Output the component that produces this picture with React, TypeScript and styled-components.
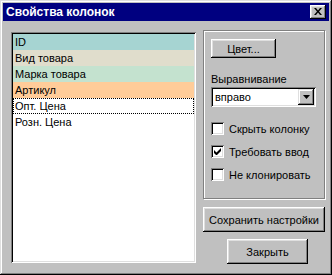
import React, { useState } from 'react';
import styled, { createGlobalStyle } from 'styled-components';

const GlobalStyle = createGlobalStyle`
  html, body {
    margin: 0;
    padding: 0;
    background: #c0c0c0;
  }
  * {
    box-sizing: border-box;
  }
`;

const columns = [
  { name: 'ID', color: '#a6d4d2' },
  { name: 'Вид товара', color: '#e0ddcc' },
  { name: 'Марка товара', color: '#c4e2cf' },
  { name: 'Артикул', color: '#ffcc99' },
  { name: 'Опт. Цена', color: '#ffffff' },
  { name: 'Розн. Цена', color: '#ffffff' },
];

const App: React.FC = () => {
  const [selected, setSelected] = useState(4);
  const [hide, setHide] = useState(false);
  const [required, setRequired] = useState(true);
  const [noClone, setNoClone] = useState(false);

  return (
    <>
      <GlobalStyle />
      <Window>
        <TitleBar>
          <Title>Свойства колонок</Title>
          <CloseButton>
            <svg width="8" height="7" viewBox="0 0 8 7">
              <path d="M0 0h2l2 2.5L6 0h2L5 3.5 8 7H6L4 4.5 2 7H0l3-3.5z" fill="#000" />
            </svg>
          </CloseButton>
        </TitleBar>

        <Content>
          <ListBox>
            {columns.map((c, i) => (
              <ListRow
                key={c.name}
                $bg={c.color}
                $focused={i === selected}
                onClick={() => setSelected(i)}
              >
                {c.name}
              </ListRow>
            ))}
          </ListBox>

          <Side>
            <GroupBox>
              <Button $w={65} $h={19}>Цвет...</Button>
              <Label>Выравнивание</Label>
              <Select>
                <SelectValue>вправо</SelectValue>
                <DropButton>
                  <svg width="7" height="4" viewBox="0 0 7 4">
                    <path d="M0 0h7L3.5 4z" fill="#000" />
                  </svg>
                </DropButton>
              </Select>
              <Checks>
                <CheckRow onClick={() => setHide(!hide)}>
                  <CheckBox>{hide && <CheckMark />}</CheckBox>
                  Скрыть колонку
                </CheckRow>
                <CheckRow onClick={() => setRequired(!required)}>
                  <CheckBox>{required && <CheckMark />}</CheckBox>
                  Требовать ввод
                </CheckRow>
                <CheckRow onClick={() => setNoClone(!noClone)}>
                  <CheckBox>{noClone && <CheckMark />}</CheckBox>
                  Не клонировать
                </CheckRow>
              </Checks>
            </GroupBox>
            <Button $w={122} $h={25} $mt={8}>Сохранить настройки</Button>
            <Button $w={81} $h={25} $mt={7} $ml={24}>Закрыть</Button>
          </Side>
        </Content>
      </Window>
    </>
  );
};

const CheckMark: React.FC = () => (
  <svg width="7" height="7" viewBox="0 0 7 7">
    <path d="M0 2v3l2 2h1l4-4V0L2.5 4.5z" fill="#000" />
  </svg>
);

const Window = styled.div`
  width: 332px;
  height: 275px;
  padding: 3px;
  background: #c0c0c0;
  box-shadow: inset -1px -1px #000, inset 1px 1px #dfdfdf, inset -2px -2px #808080,
    inset 2px 2px #fff;
  display: flex;
  flex-direction: column;
  font-family: 'Liberation Sans', Arial, sans-serif;
  font-size: 11px;
  color: #000;
`;

const TitleBar = styled.div`
  height: 18px;
  background: #000080;
  display: flex;
  align-items: center;
  justify-content: space-between;
  padding: 0 3px 0 3px;
`;

const Title = styled.span`
  color: #fff;
  font-weight: bold;
  font-size: 12px;
`;

const CloseButton = styled.div`
  width: 16px;
  height: 14px;
  background: #c0c0c0;
  box-shadow: inset -1px -1px #000, inset 1px 1px #fff, inset -2px -2px #808080,
    inset 2px 2px #dfdfdf;
  display: flex;
  align-items: center;
  justify-content: center;
  padding-bottom: 1px;
`;

const Content = styled.div`
  display: flex;
  gap: 7px;
  padding: 9px 4px 0 8px;
`;

const ListBox = styled.div`
  width: 185px;
  height: 231px;
  margin-top: 2px;
  padding: 2px;
  background: #fff;
  box-shadow: inset 1px 1px #808080, inset -1px -1px #fff, inset 2px 2px #000,
    inset -2px -2px #dfdfdf;
  display: flex;
  flex-direction: column;
`;

const ListRow = styled.div<{ $bg: string; $focused: boolean }>`
  height: 16px;
  line-height: 14px;
  padding-left: 1px;
  background: ${(p) => p.$bg};
  border: 1px ${(p) => (p.$focused ? 'dotted #000' : 'solid transparent')};
  white-space: nowrap;
`;

const Side = styled.div`
  width: 122px;
  display: flex;
  flex-direction: column;
  align-items: flex-start;
`;

const GroupBox = styled.div`
  width: 122px;
  height: 169px;
  border: 1px solid #808080;
  box-shadow: inset 1px 1px #fff, 1px 1px #fff;
  padding: 8px 7px 0 7px;
  display: flex;
  flex-direction: column;
  align-items: flex-start;
`;

const Button = styled.div<{ $w: number; $h: number; $mt?: number; $ml?: number }>`
  width: ${(p) => p.$w}px;
  height: ${(p) => p.$h}px;
  margin-top: ${(p) => p.$mt ?? 0}px;
  margin-left: ${(p) => p.$ml ?? 0}px;
  background: #c0c0c0;
  box-shadow: inset -1px -1px #000, inset 1px 1px #fff, inset -2px -2px #808080,
    inset 2px 2px #dfdfdf;
  display: flex;
  align-items: center;
  justify-content: center;
  white-space: nowrap;
`;

const Label = styled.div`
  height: 13px;
  line-height: 13px;
  margin-top: 15px;
`;

const Select = styled.div`
  width: 105px;
  height: 20px;
  margin-top: 1px;
  padding: 2px;
  background: #fff;
  box-shadow: inset 1px 1px #808080, inset -1px -1px #fff, inset 2px 2px #000,
    inset -2px -2px #dfdfdf;
  display: flex;
  align-items: center;
`;

const SelectValue = styled.span`
  flex: 1;
  padding-left: 2px;
`;

const DropButton = styled.div`
  width: 16px;
  height: 16px;
  background: #c0c0c0;
  box-shadow: inset -1px -1px #000, inset 1px 1px #dfdfdf, inset -2px -2px #808080,
    inset 2px 2px #fff;
  display: flex;
  align-items: center;
  justify-content: center;
`;

const Checks = styled.div`
  margin-top: 15px;
  display: flex;
  flex-direction: column;
  gap: 10px;
`;

const CheckRow = styled.label`
  display: flex;
  align-items: center;
  gap: 5px;
  height: 13px;
  white-space: nowrap;
`;

const CheckBox = styled.span`
  width: 13px;
  height: 13px;
  background: #fff;
  box-shadow: inset 1px 1px #808080, inset -1px -1px #fff, inset 2px 2px #000,
    inset -2px -2px #dfdfdf;
  display: flex;
  align-items: center;
  justify-content: center;
`;

export default App;
